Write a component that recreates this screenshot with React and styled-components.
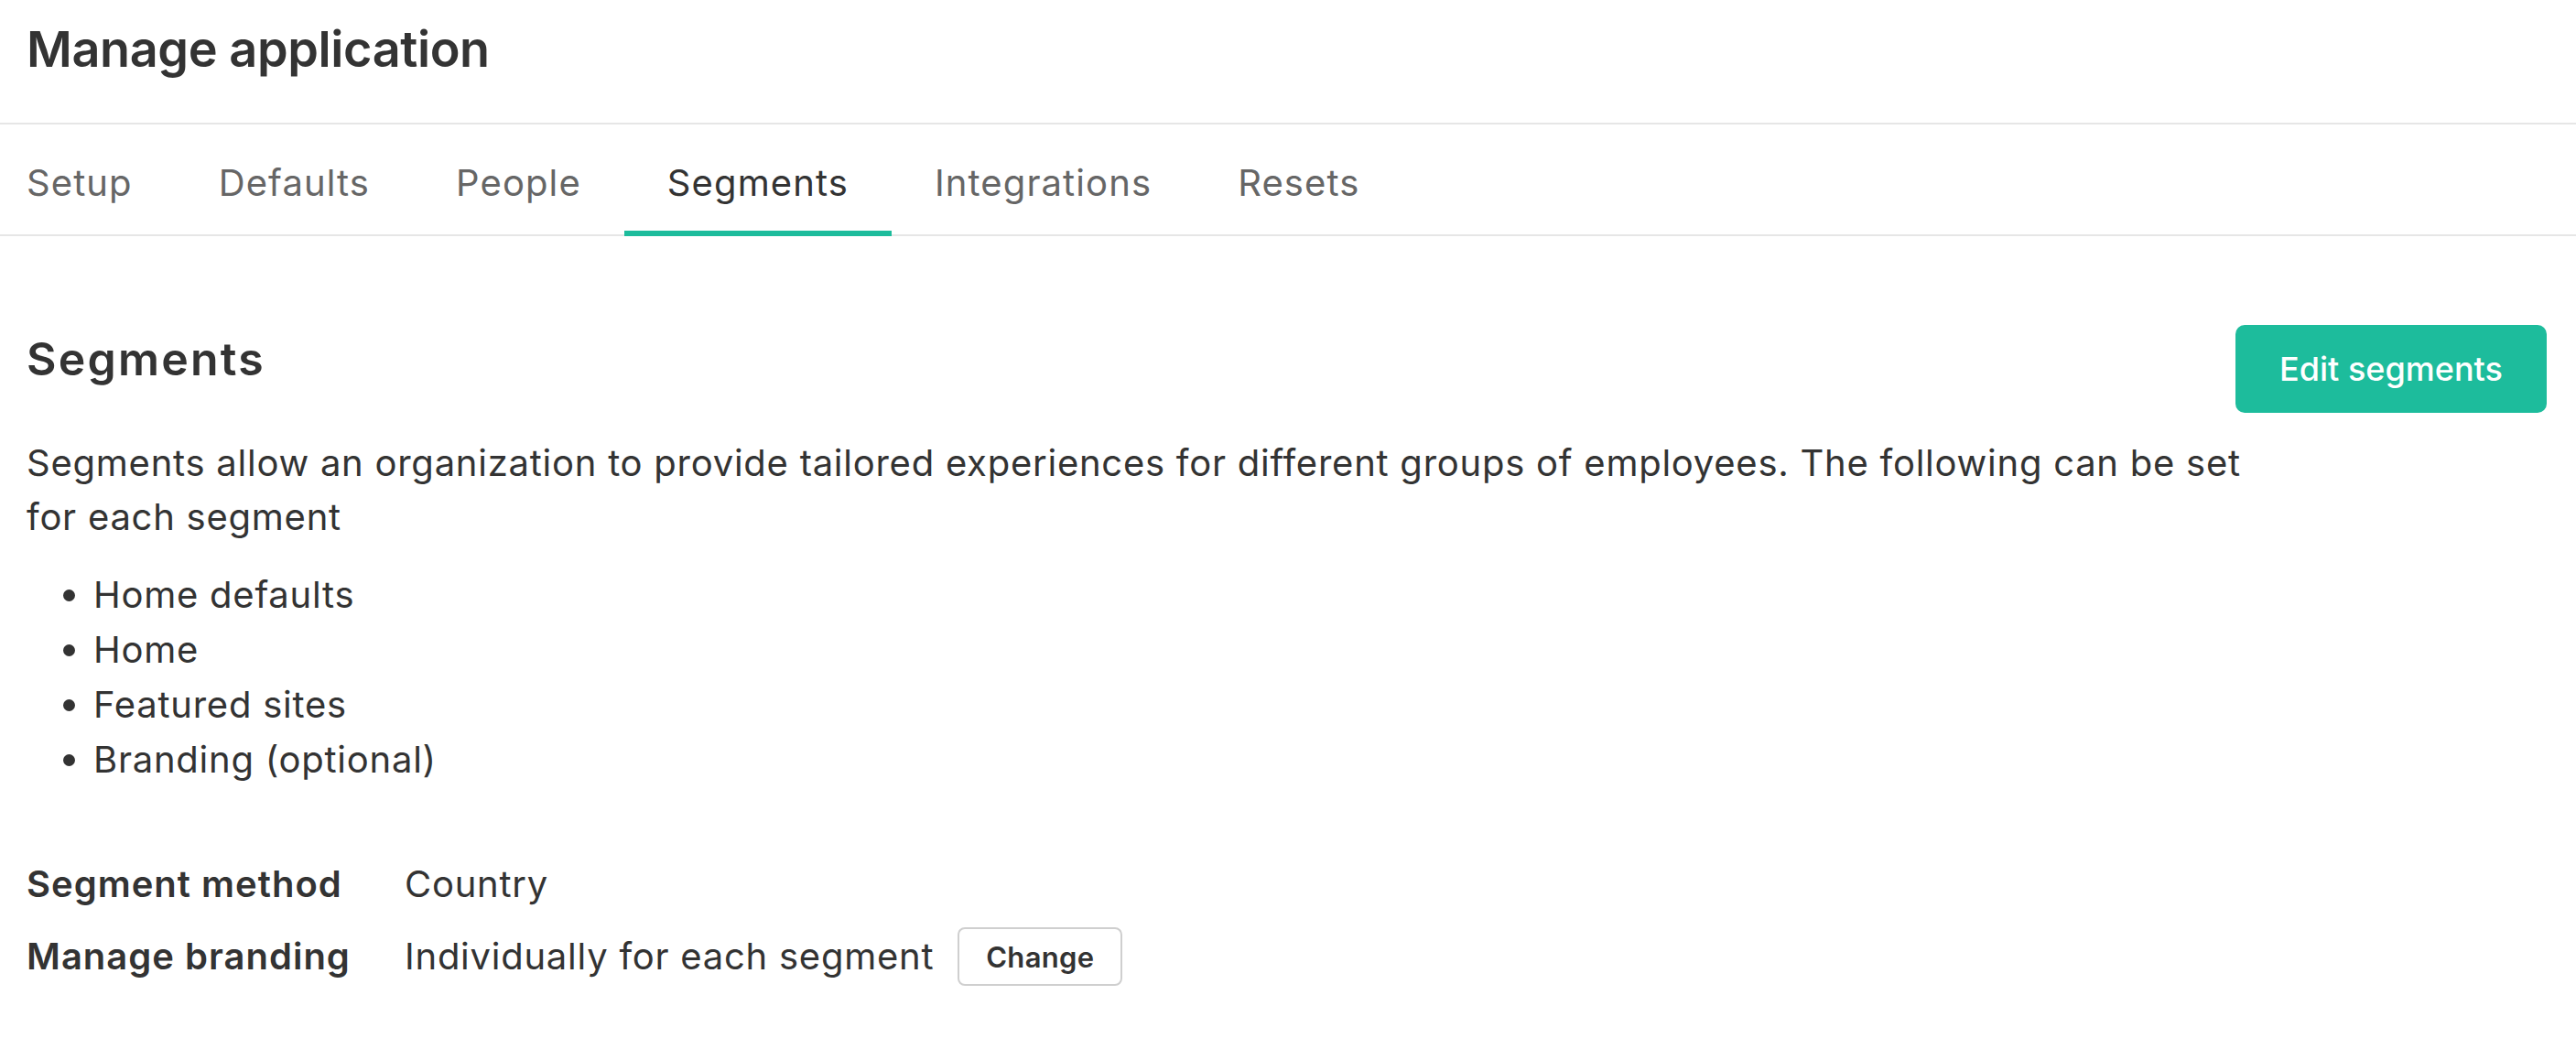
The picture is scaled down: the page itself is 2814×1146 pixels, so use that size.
import React from 'react'
import styled, { createGlobalStyle } from 'styled-components'

const GlobalStyle = createGlobalStyle`
  html, body {
    margin: 0;
    padding: 0;
    background: #ffffff;
  }
  body {
    font-family: 'Inter', 'Liberation Sans', sans-serif;
    color: #333333;
    overflow-x: hidden;
  }
`

const tabs = ['Setup', 'Defaults', 'People', 'Segments', 'Integrations', 'Resets']
const features = ['Home defaults', 'Home', 'Featured sites', 'Branding (optional)']

export default function App() {
  return (
    <Page>
      <GlobalStyle />
      <Header>
        <Title>Manage application</Title>
      </Header>
      <TabBar>
        <TabList>
          {tabs.map((t) => (
            <Tab key={t} active={t === 'Segments'}>{t}</Tab>
          ))}
        </TabList>
      </TabBar>
      <Content>
        <SectionHead>
          <Heading>Segments</Heading>
          <PrimaryButton>Edit segments</PrimaryButton>
        </SectionHead>
        <Paragraph>
          Segments allow an organization to provide tailored experiences for different groups of employees. The following can be set for each segment
        </Paragraph>
        <List>
          {features.map((f) => (
            <Item key={f}>{f}</Item>
          ))}
        </List>
        <Details>
          <Label>Segment method</Label>
          <Value>Country</Value>
          <Label>Manage branding</Label>
          <Value>
            Individually for each segment
            <SmallButton>Change</SmallButton>
          </Value>
        </Details>
      </Content>
    </Page>
  )
}

const Page = styled.div`
  width: 100%;
  min-height: 100vh;
  display: flex;
  flex-direction: column;
`

const Header = styled.div`
  height: 136px;
  box-sizing: border-box;
  padding: 22px 32px 0 29px;
  border-bottom: 2px solid #e6e6e6;
`

const Title = styled.h1`
  margin: 0;
  font-size: 54px;
  line-height: 64px;
  font-weight: 600;
  color: #333333;
  letter-spacing: -0.4px;
`

const TabBar = styled.div`
  border-bottom: 2px solid #e6e6e6;
  padding-left: 29px;
`

const TabList = styled.div`
  display: flex;
  margin-left: -47px;
`

const Tab = styled.div`
  height: 122px;
  box-sizing: border-box;
  padding: 10px 47px 0;
  margin-bottom: -2px;
  display: flex;
  align-items: center;
  font-size: 40px;
  font-weight: 400;
  letter-spacing: 1.1px;
  color: ${(p) => (p.active ? '#333333' : '#666666')};
  border-bottom: 6px solid ${(p) => (p.active ? '#1dbc9c' : 'transparent')};
  cursor: pointer;
`

const Content = styled.div`
  padding: 97px 32px 0 29px;
`

const SectionHead = styled.div`
  display: flex;
  justify-content: space-between;
  align-items: flex-start;
`

const Heading = styled.h2`
  margin: 0;
  font-size: 50px;
  line-height: 74px;
  font-weight: 600;
  letter-spacing: 2.2px;
  color: #333333;
`

const PrimaryButton = styled.button`
  height: 96px;
  width: 340px;
  border: none;
  border-radius: 10px;
  background: #1dbc9c;
  color: #ffffff;
  font-family: inherit;
  font-size: 36px;
  font-weight: 500;
  cursor: pointer;
`

const Paragraph = styled.p`
  margin: 25px 0 0;
  max-width: 2470px;
  font-size: 40px;
  line-height: 59px;
  font-weight: 400;
  letter-spacing: 0.75px;
`

const List = styled.ul`
  margin: 26px 0 0;
  padding-left: 73px;
`

const Item = styled.li`
  font-size: 40px;
  line-height: 60px;
  letter-spacing: 0.75px;
`

const Details = styled.div`
  margin-top: 76px;
  display: grid;
  grid-template-columns: 413px auto;
  row-gap: 17px;
  align-items: center;
`

const Label = styled.div`
  font-size: 40px;
  line-height: 60px;
  font-weight: 600;
  letter-spacing: 1px;
`

const Value = styled.div`
  display: flex;
  align-items: center;
  font-size: 40px;
  line-height: 60px;
  letter-spacing: 0.75px;
`

const SmallButton = styled.button`
  margin-left: 26px;
  width: 180px;
  height: 64px;
  border: 2px solid #cfcfcf;
  border-radius: 8px;
  background: #ffffff;
  color: #333333;
  font-family: inherit;
  font-size: 31px;
  font-weight: 600;
  letter-spacing: 0.3px;
  cursor: pointer;
`
